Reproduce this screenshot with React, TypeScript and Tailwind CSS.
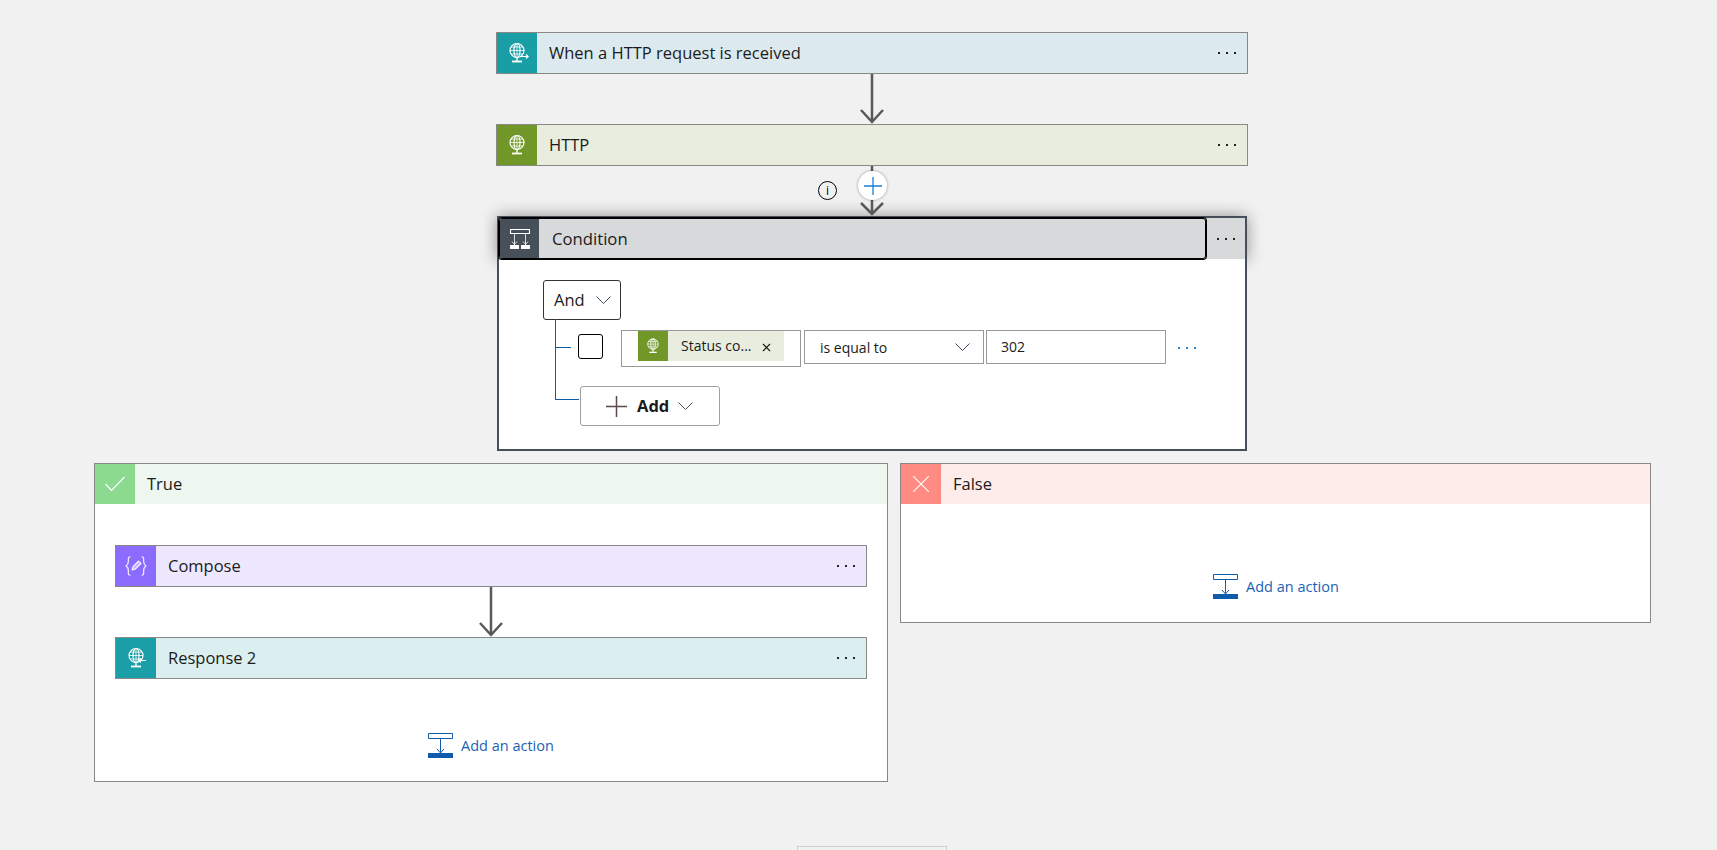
import React from 'react';
import { X } from 'lucide-react';

function Globe({ arrow }: { arrow?: 'out' | 'in' }) {
  return (
    <svg width="24" height="24" viewBox="0 0 24 24" fill="none" stroke="#fff" strokeWidth="1.2">
      <circle cx="12" cy="9.5" r="7" />
      <ellipse cx="12" cy="9.5" rx="3" ry="7" />
      <path d="M5 9.500h14M6 6h12M6 13h12M12 2.500v14" strokeWidth="0.8" />
      <path d="M12 16.500v4" strokeWidth="1.4" />
      <path d="M7 20.500h10" strokeWidth="1.8" />
      {arrow === 'out' && <path d="M15 15.500h8M21 13.500l2.200 2-2.200 2" />}
      {arrow === 'in' && <path d="M22 14.500h-7M17 12.500l-2.200 2 2.200 2" />}
    </svg>
  );
}

function ConditionIcon() {
  return (
    <svg width="20" height="20" viewBox="0 0 20 20" fill="none" stroke="#fff">
      <path d="M.5.500h19v4H.5z" strokeWidth="1.2" />
      <path d="M4.500 5v11M15.500 5v11M2 12.500l2.500 3 2.500-3M13 12.500l2.500 3 2.500-3" strokeWidth="1" strokeOpacity="0.8" />
      <path d="M0 16h9v4H0zM11 16h9v4h-9z" fill="#fff" stroke="none" />
    </svg>
  );
}

function ComposeIcon() {
  return (
    <svg width="24" height="24" viewBox="0 0 22 22" fill="none" stroke="#fff" strokeWidth="1.1" className="opacity-90">
      <path d="M6 2.500c-2.500 0-2 2-2 4s0 3.200-2 4.500c2 1.300 2 2.500 2 4.500s-.5 4 2 4" />
      <path d="M16 2.500c2.500 0 2 2 2 4s0 3.200 2 4.500c-2 1.300-2 2.500-2 4.500s.5 4-2 4" />
      <path d="M7.500 14.500l.8-3 5-5 2.200 2.200-5 5z" fill="#fff" fillOpacity="0.55" />
    </svg>
  );
}

function Chevron({ className = '' }: { className?: string }) {
  return (
    <svg width="15" height="8" viewBox="0 0 15 8" fill="none" stroke="#405060" className={className}>
      <path d="M.5.500l7 7 7-7" />
    </svg>
  );
}

function Dots({ color = 'bg-[#222]' }: { color?: string }) {
  return (
    <div className="flex gap-[6px]">
      <span className={`w-[2px] h-[2px] ${color}`} />
      <span className={`w-[2px] h-[2px] ${color}`} />
      <span className={`w-[2px] h-[2px] ${color}`} />
    </div>
  );
}

function Card({ title, icon, iconBg, bg }: { title: string; icon: React.ReactNode; iconBg: string; bg: string }) {
  return (
    <div className={`h-[42px] flex items-center border border-[#8a8886] ${bg}`}>
      <div className={`w-[40px] h-full flex items-center justify-center shrink-0 ${iconBg}`}>{icon}</div>
      <span className="ml-3 mt-px flex-1 text-[16.5px] text-[#1b1b1b] leading-none">{title}</span>
      <div className="mr-[11px]">
        <Dots />
      </div>
    </div>
  );
}

function Arrow() {
  return (
    <div className="h-[50px] flex justify-center">
      <svg width="26" height="50" viewBox="0 0 26 50" fill="none" stroke="#595959" strokeWidth="2.5">
        <path d="M13 0v48M2 36l11 12 11-12" />
      </svg>
    </div>
  );
}

function AddAction({ className }: { className: string }) {
  return (
    <div className={`flex items-center gap-2 ${className}`}>
      <svg width="25" height="25" viewBox="0 0 25 25" fill="none" stroke="#0f5cad">
        <path d="M.5.500h24v5H.5z" />
        <path d="M12.500 5.500v14M9 16l3.500 4 3.500-4" />
        <path d="M0 20h25v5H0z" fill="#0f5cad" stroke="none" />
      </svg>
      <span className="mt-px text-[14.5px] leading-none text-[#1c62b4]">Add an action</span>
    </div>
  );
}

function TreeLines() {
  return (
    <>
      <div className="absolute left-[56px] top-[101px] w-[24px] h-[81px] border-l border-b border-[#0f5cad]" />
      <div className="absolute left-[56px] top-[129px] w-[16px] border-t border-[#0f5cad]" />
    </>
  );
}

export default function App() {
  return (
    <div
      className="isolate h-[850px] overflow-hidden bg-[#f1f1f1] pt-[32px]"
      style={{ fontFamily: '"Open Sans", "Noto Sans", sans-serif' }}
    >
      <div className="ml-[496px] w-[752px]">
        <Card title="When a HTTP request is received" icon={<Globe arrow="out" />} iconBg="bg-[#1a9ea6]" bg="bg-[#dceaef]" />
        <Arrow />
        <Card title="HTTP" icon={<Globe />} iconBg="bg-[#709727]" bg="bg-[#e9eddf]" />

        <div className="relative h-[50px] flex justify-center">
          <svg width="26" height="50" viewBox="0 0 26 50" fill="none" stroke="#595959" strokeWidth="2.5">
            <path d="M13 0v48M2 37l11 11 11-11" />
          </svg>
          <div className="absolute left-[362px] top-[5px] w-[29px] h-[29px] rounded-full bg-white shadow-[0_0_3px_rgba(0,0,0,0.4)] flex items-center justify-center">
            <svg width="18" height="18" viewBox="0 0 18 18" stroke="#1a7fd8" strokeWidth="1.3">
              <path d="M9 0v18M0 9h18" />
            </svg>
          </div>
          <div className="absolute left-[322px] top-[15px] w-[19px] h-[19px] rounded-full border border-black flex items-center justify-center text-[12px] leading-none text-black">
            i
          </div>
        </div>

        <div className="relative ml-px w-[750px] h-[235px] border-2 border-[#47505a] bg-white">
          <div className="absolute -z-10 -inset-x-[2px] -top-[2px] h-[44px] shadow-[0_0_16px_rgba(0,0,0,0.4)]" />
          <div className="flex h-[41px] bg-[#d8d9db]">
            <div className="w-[707px] flex items-center border border-black rounded-[3px] shadow-[0_0_0_1px_#000]">
              <div className="w-[39px] h-full bg-[#474f59] flex items-center justify-center shrink-0">
                <ConditionIcon />
              </div>
              <span className="ml-[13px] mt-px text-[16.7px] leading-none text-[#1b1b1b]">Condition</span>
            </div>
            <div className="flex-1 flex items-center justify-center">
              <Dots />
            </div>
          </div>

          <TreeLines />

          <div className="pl-[44px] pt-[21px]">
            <div className="w-[78px] h-[40px] border border-[#333] rounded-[3px] flex items-center pl-[10px] gap-[11px] text-[16.5px] text-[#1b1b1b]">
              And
              <Chevron />
            </div>
            <div className="flex items-start mt-[10px]">
              <div className="ml-[35px] mt-[4px] w-[25px] h-[25px] rounded-[3px] border border-black bg-white" />
              <div className="ml-[18px] w-[180px] h-[37px] border border-[#999] pl-[16px] flex items-start">
                <div className="w-[146px] h-[30px] bg-[#e9eddf] flex items-center">
                  <div className="w-[30px] h-full bg-[#709727] flex items-center justify-center">
                    <div className="scale-75">
                      <Globe />
                    </div>
                  </div>
                  <span className="ml-[13px] text-[14px] leading-none text-[#1b1b1b]">Status co...</span>
                  <X size={13} strokeWidth={2} className="ml-[8px] mt-[3px] text-[#1b1b1b]" />
                </div>
              </div>
              <div className="ml-[3px] w-[180px] h-[34px] border border-[#999] pl-[15px] pr-[13px] flex items-center justify-between text-[14px] text-[#1b1b1b]">
                is equal to
                <Chevron />
              </div>
              <div className="ml-[2px] w-[180px] h-[34px] border border-[#999] pl-[14px] pb-[2px] flex items-center text-[14px] text-[#1b1b1b]">
                302
              </div>
              <div className="ml-[12px] mt-[17px]">
                <Dots color="bg-[#2b88d8]" />
              </div>
            </div>
            <div className="ml-[37px] mt-[19px] w-[140px] h-[40px] border border-[#a0a0a0] rounded-[3px] bg-white relative flex items-center pl-[25px]">
              <svg width="21" height="21" viewBox="0 0 21 21" stroke="#5c4a4a" strokeWidth="1.5">
                <path d="M10.500 0v21M0 10.500h21" />
              </svg>
              <span className="ml-[10px] text-[16.5px] font-bold leading-none text-[#1b1b1b]">Add</span>
              <Chevron className="ml-[9px]" />
            </div>
          </div>
        </div>
      </div>

      <div className="ml-[94px] mt-[12px] flex items-start gap-[12px]">
        <div className="w-[794px] h-[319px] border border-[#8a8886] bg-white">
          <div className="h-[40px] bg-[#eef7ef] flex items-center">
            <div className="w-[40px] h-full bg-[#8cd990] flex items-center justify-center">
              <svg width="20" height="16" viewBox="0 0 20 16" fill="none" stroke="#fff" strokeWidth="1.2">
                <path d="M0.500 8l6 6.500L19.500 1" />
              </svg>
            </div>
            <span className="ml-3 text-[16.5px] leading-none text-[#1b1b1b]">True</span>
          </div>
          <div className="mt-[41px] mx-[20px] w-[752px]">
            <Card title="Compose" icon={<ComposeIcon />} iconBg="bg-[#8c6cff]" bg="bg-[#ede8fe]" />
            <Arrow />
            <Card title="Response 2" icon={<Globe arrow="in" />} iconBg="bg-[#1a9ea7]" bg="bg-[#dbeff1]" />
          </div>
          <AddAction className="mt-[54px] ml-[333px]" />
        </div>

        <div className="w-[751px] h-[160px] border border-[#8a8886] bg-white">
          <div className="h-[40px] bg-[#feeceb] flex items-center">
            <div className="w-[40px] h-full bg-[#ff8b82] flex items-center justify-center">
              <svg width="16" height="16" viewBox="0 0 16 16" stroke="#fff" strokeWidth="1.1">
                <path d="M0 0l16 16M16 0L0 16" />
              </svg>
            </div>
            <span className="ml-3 text-[16.5px] leading-none text-[#1b1b1b]">False</span>
          </div>
          <AddAction className="mt-[70px] ml-[312px]" />
        </div>
      </div>

      <div className="ml-[797px] mt-[64px] w-[150px] h-[20px] border border-[#d0d0d0] bg-[#f1f1f1]" />
    </div>
  );
}
